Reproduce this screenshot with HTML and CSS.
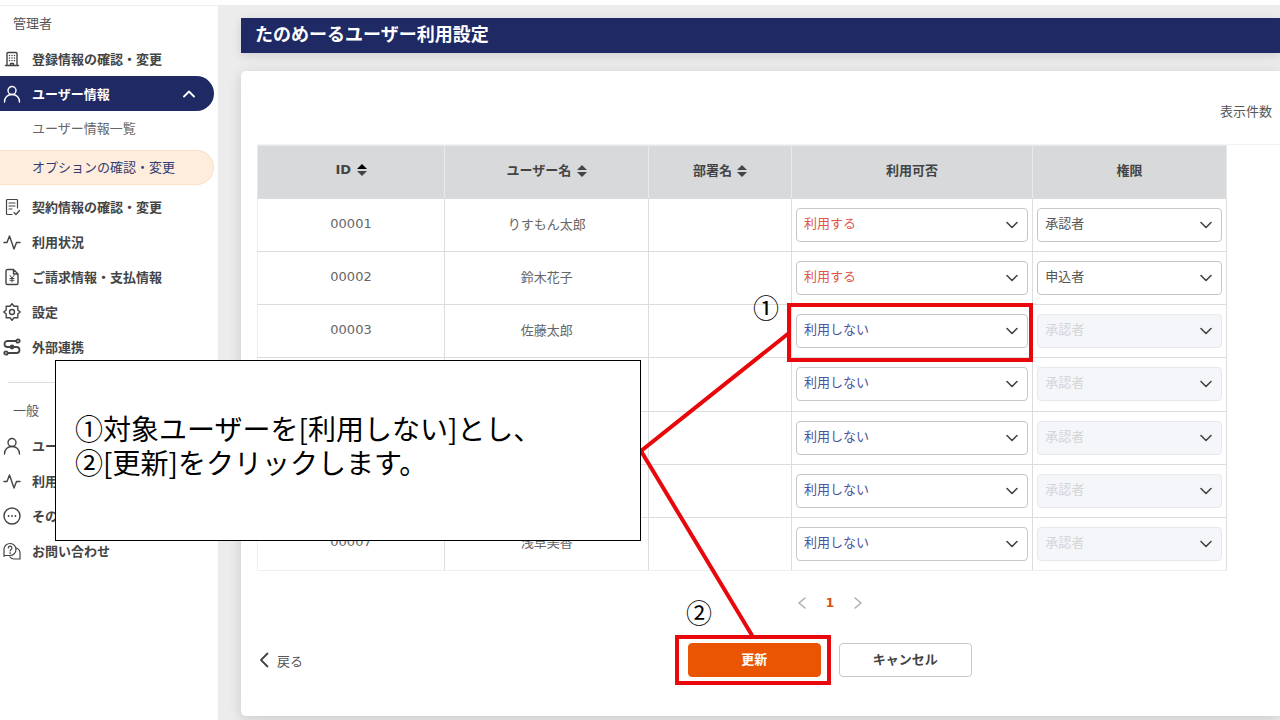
FILE: index.html
```html
<!DOCTYPE html>
<html lang="ja">
<head>
  <meta charset="UTF-8" />
  <title>たのめーるユーザー利用設定</title>
  <link rel="stylesheet" href="styles.css">
</head>
<body>
<div class="layout">

  <!-- Side menu -->
  <nav class="sidebar">
    <h2 class="menu-title">管理者</h2>
    <a class="menu-item" href="#">
      <svg class="icon" viewBox="0 0 18 18"><path d="M4 15.500V3.500a1 1 0 0 1 1-1h8a1 1 0 0 1 1 1v12M2.500 15.500h13M7.500 15.500v-2h3v2"/><path class="dots" d="M6.500 5.500h6M6.500 8h6M6.500 10.500h6"/></svg>
      登録情報の確認・変更
    </a>
    <a class="menu-item active" href="#">
      <svg class="icon" viewBox="0 0 18 18"><circle cx="9" cy="5.500" r="4"/><path d="M1.500 17c0-4.500 3-7.500 7.500-7.500s7.500 3 7.500 7.500"/></svg>
      ユーザー情報
      <svg class="arrow" viewBox="0 0 12 8"><path d="M1 6.500l5-5 5 5"/></svg>
    </a>
    <a class="menu-sub" href="#">ユーザー情報一覧</a>
    <a class="menu-sub current" href="#">オプションの確認・変更</a>
    <a class="menu-item" href="#">
      <svg class="icon thin" viewBox="0 0 18 18"><path d="M14.500 10V2.500a1 1 0 0 0-1-1h-9a1 1 0 0 0-1 1v13a1 1 0 0 0 1 1H9M6 5h6M6 8h6M6 11h3M11 14.500l2 2 3.500-4"/></svg>
      契約情報の確認・変更
    </a>
    <a class="menu-item" href="#">
      <svg class="icon" viewBox="0 0 18 18"><path d="M1 9.500h3L6.500 3l4.500 13 2.500-6.500H17"/></svg>
      利用状況
    </a>
    <a class="menu-item" href="#">
      <svg class="icon" viewBox="0 0 18 18"><path d="M10.500 1.500H4.500A1.500 1.500 0 0 0 3 3v12a1.500 1.500 0 0 0 1.500 1.500h9A1.500 1.500 0 0 0 15 15V6zM10.500 1.500V6H15"/><path class="yen" d="M7 7.500l2 2.500 2-2.500M9 10v4M7 10.500h4M7 12.300h4"/></svg>
      ご請求情報・支払情報
    </a>
    <a class="menu-item" href="#">
      <svg class="icon" viewBox="0 0 18 18"><circle cx="9" cy="9" r="2.500"/><path d="M9 .8 L11 3.200 L14.800 3.200 L14.800 7 L17.200 9 L14.800 11 L14.800 14.800 L11 14.800 L9 17.200 L7 14.800 L3.200 14.800 L3.200 11 L.8 9 L3.200 7 L3.200 3.200 L7 3.200z"/></svg>
      設定
    </a>
    <a class="menu-item" href="#">
      <svg class="icon bold" viewBox="0 0 18 18"><circle cx="15" cy="3" r="1.700"/><circle cx="3" cy="15" r="1.700"/><path d="M13.300 3H4.500a3 3 0 0 0 0 6h9a3 3 0 0 1 0 6H4.700"/><circle class="fill" cx="9" cy="9" r="1.500"/></svg>
      外部連携
    </a>
    <hr class="divider">
    <h2 class="menu-title">一般</h2>
    <a class="menu-item" href="#">
      <svg class="icon" viewBox="0 0 18 18"><circle cx="9" cy="5.500" r="4"/><path d="M1.500 17c0-4.500 3-7.500 7.500-7.500s7.500 3 7.500 7.500"/></svg>
      ユーザー情報
    </a>
    <a class="menu-item" href="#">
      <svg class="icon" viewBox="0 0 18 18"><path d="M1 9.500h3L6.500 3l4.500 13 2.500-6.500H17"/></svg>
      利用状況
    </a>
    <a class="menu-item" href="#">
      <svg class="icon" viewBox="0 0 18 18"><circle cx="9" cy="9" r="8"/><path class="dots wide" d="M5.600 9h8"/></svg>
      その他
    </a>
    <a class="menu-item" href="#">
      <svg class="icon thin" viewBox="0 0 18 18"><path d="M1 14.500V7a6 6 0 1 1 6 6.500H1zM13.500 6a5.500 5.500 0 0 1 3.500 5v6h-6a5 5 0 0 1-4-2"/><path d="M5.300 6a1.800 1.800 0 1 1 2.700 1.500c-.7.4-.9.800-.9 1.500M7.100 10.500v1"/></svg>
      お問い合わせ
    </a>
  </nav>

  <!-- Main -->
  <main class="main">
    <h1 class="page-title">たのめーるユーザー利用設定</h1>
    <section class="card">
      <p class="count">表示件数</p>
      <div class="table-wrap">
        <table class="users">
          <colgroup><col class="c-id"><col class="c-name"><col class="c-dept"><col class="c-use"><col class="c-role"></colgroup>
          <thead>
            <tr>
              <th>ID <svg class="sort" viewBox="0 0 10 12"><path class="up" d="M0 5l5-5 5 5z"/><path d="M0 7l5 5 5-5z"/></svg></th>
              <th>ユーザー名 <svg class="sort" viewBox="0 0 10 12"><path d="M0 5l5-5 5 5zM0 7l5 5 5-5z"/></svg></th>
              <th>部署名 <svg class="sort" viewBox="0 0 10 12"><path d="M0 5l5-5 5 5zM0 7l5 5 5-5z"/></svg></th>
              <th>利用可否</th>
              <th>権限</th>
            </tr>
          </thead>
          <tbody>
            <tr>
              <td>00001</td><td>りすもん太郎</td><td></td>
              <td class="field"><select class="select on" aria-label="利用可否"><option selected>利用する</option><option>利用しない</option></select></td>
              <td class="field"><select class="select" aria-label="権限"><option selected>承認者</option><option>申込者</option></select></td>
            </tr>
            <tr>
              <td>00002</td><td>鈴木花子</td><td></td>
              <td class="field"><select class="select on" aria-label="利用可否"><option selected>利用する</option><option>利用しない</option></select></td>
              <td class="field"><select class="select" aria-label="権限"><option>承認者</option><option selected>申込者</option></select></td>
            </tr>
            <tr>
              <td>00003</td><td>佐藤太郎</td><td></td>
              <td class="field"><select class="select off" aria-label="利用可否"><option>利用する</option><option selected>利用しない</option></select></td>
              <td class="field"><select class="select" aria-label="権限" disabled><option>承認者</option></select></td>
            </tr>
            <tr>
              <td></td><td></td><td></td>
              <td class="field"><select class="select off" aria-label="利用可否"><option>利用する</option><option selected>利用しない</option></select></td>
              <td class="field"><select class="select" aria-label="権限" disabled><option>承認者</option></select></td>
            </tr>
            <tr>
              <td></td><td></td><td></td>
              <td class="field"><select class="select off" aria-label="利用可否"><option>利用する</option><option selected>利用しない</option></select></td>
              <td class="field"><select class="select" aria-label="権限" disabled><option>承認者</option></select></td>
            </tr>
            <tr>
              <td></td><td></td><td></td>
              <td class="field"><select class="select off" aria-label="利用可否"><option>利用する</option><option selected>利用しない</option></select></td>
              <td class="field"><select class="select" aria-label="権限" disabled><option>承認者</option></select></td>
            </tr>
            <tr>
              <td>00007</td><td>浅草美香</td><td></td>
              <td class="field"><select class="select off" aria-label="利用可否"><option>利用する</option><option selected>利用しない</option></select></td>
              <td class="field"><select class="select" aria-label="権限" disabled><option>承認者</option></select></td>
            </tr>
          </tbody>
        </table>
      </div>

      <div class="pager">
        <button class="page-btn" aria-label="前へ"><svg viewBox="0 0 8 12"><path d="M7 1L1 6l6 5"/></svg></button>
        <a class="page-now" href="#">1</a>
        <button class="page-btn" aria-label="次へ"><svg viewBox="0 0 8 12"><path d="M1 1l6 5-6 5"/></svg></button>
      </div>

      <div class="actions">
        <a class="back" href="#"><svg viewBox="0 0 10 16"><path d="M8.500 1.500L2 8l6.500 6.500"/></svg>戻る</a>
        <div class="buttons">
          <button class="btn primary">更新</button>
          <button class="btn">キャンセル</button>
        </div>
      </div>
    </section>
  </main>
</div>

<!-- Guide notes over the page -->
<div class="guide">
  <svg class="lines" width="1280" height="720" viewBox="0 0 1280 720">
    <path d="M789 333L641 451L753 637"/>
    <rect x="789" y="305" width="242" height="55"/>
    <rect x="677" y="637" width="152" height="46"/>
  </svg>
  <span class="mark mark-1">①</span>
  <span class="mark mark-2">②</span>
  <div class="callout">
    <p>①対象ユーザーを[利用しない]とし、<br>②[更新]をクリックします。</p>
  </div>
</div>
</body>
</html>
```
FILE: styles.css
```css
*            {box-sizing:border-box;}
body         {font-family:"Noto Sans CJK JP", sans-serif; font-size:13px; margin:0; background:#fff; color:#444;}
a            {color:inherit; text-decoration:none;}
button       {font-family:inherit; cursor:pointer;}
svg          {fill:none; stroke:currentColor; stroke-linecap:round; stroke-linejoin:round;}

.layout      {display:flex; min-height:100vh; padding-top:5px;}

/* side menu */
.sidebar     {flex:0 0 218px; border-top:1px solid #eee;}
.menu-title  {display:flex; align-items:center; height:35px; margin:0; padding:0 0 2px 13px; font-size:13px; font-weight:400; color:#555;}
.menu-item   {display:flex; align-items:center; height:35px; margin-right:4px; padding-left:3px; gap:11px; font-weight:700;}
.active      {background:#1f2963; color:#fff; border-radius:0 18px 18px 0;}
.icon        {width:18px; height:18px; flex:none; stroke-width:1.4;}
.thin        {stroke-width:1.2;}
.bold        {stroke-width:1.8;}
.yen         {stroke-width:1;}
.dots        {stroke-dasharray:0 2.5; stroke-width:1.5;}
.wide        {stroke-dasharray:0 3.4; stroke-width:1.8;}
.fill        {fill:currentColor;}
.arrow       {width:12px; height:8px; margin-left:auto; margin-right:19px; stroke-width:1.8;}
.menu-sub    {display:flex; align-items:center; height:35px; margin:0 4px 4px 0; padding:0 0 2px 32px; color:#666;}
.current     {background:#feecdc; border:1px solid #fbdfc6; border-left:0; border-radius:0 18px 18px 0; color:#333c70;}
.divider     {margin:18px 8px 10px; border:0; border-top:1px solid #ddd;}

/* main */
.main        {flex:1; min-width:0; padding:13px 0 4px 23px; background:#ececec;}
.page-title  {display:flex; align-items:center; height:35px; margin:0 0 18px; padding:0 14px 5px; background:#1f2963; color:#fff; font-size:18px; line-height:26px; box-shadow:0 3px 10px rgba(0,0,0,0.12);}
.card        {padding:30px 0 39px 16px; background:#fff; border-radius:5px 0 0 5px; box-shadow:0 3px 14px rgba(0,0,0,0.14);}
.count       {margin:0 8px 23px; text-align:right; line-height:20px; color:#555;}
.table-wrap  {padding-right:53px; border-top:1px solid #f2f2f4;}

.users       {width:100%; height:426px; table-layout:fixed; border-collapse:collapse; text-align:center; color:#666; font-family:"DejaVu Sans", "Noto Sans CJK JP", sans-serif;}
.users th    {height:53px; padding:0 0 6px; background:#d7d9db; border:1px solid #e8e9ea; border-bottom-color:#ddd; color:#444;}
.users td    {height:53px; padding:0 0 4px; border:1px solid #ddd;}
.users td:first-child    {border-left-color:#eee;}
.users tr:last-child td  {border-bottom-color:#eee;}
.users .field {padding:0 4px;}
.c-id        {width:19.3%;}
.c-name      {width:21.1%;}
.c-dept      {width:14.7%;}
.c-use       {width:24.9%;}
.c-role      {width:20%;}
.sort        {width:10px; height:12px; margin-left:1px; vertical-align:-2px; fill:#444; stroke:none;}
.up          {fill:#000;}

.select      {display:block; width:100%; height:34px; padding:0 28px 3px 7px; appearance:none; border:1px solid #c4c6ca; border-radius:4px; font:inherit; font-size:13px; color:#555;
              background:#fff url("data:image/svg+xml,%3Csvg xmlns='http://www.w3.org/2000/svg' width='12' height='8' viewBox='0 0 12 8'%3E%3Cpath d='M1 1.5l5 5 5-5' fill='none' stroke='%23444' stroke-width='1.6' stroke-linecap='round' stroke-linejoin='round'/%3E%3C/svg%3E") no-repeat right 9px center;}
.on          {color:#e05548;}
.off         {color:#4a549c;}
.select:disabled {background-color:#f5f6fa; border-color:#e6e8ec; color:#d3d4d8; opacity:1;}

.pager       {display:flex; justify-content:center; align-items:center; gap:20px; padding:22px 0 0 12%;}
.page-btn    {padding:0; border:0; background:none; color:#aaa; line-height:0;}
.page-btn svg {width:8px; height:12px; stroke-width:1.4;}
.page-now    {font-family:"DejaVu Sans", sans-serif; font-size:12px; font-weight:700; line-height:20px; color:#d8500c;}

.actions     {display:grid; grid-template-columns:42% auto; align-items:center; margin-top:30px;}
.back        {display:flex; align-items:center; gap:8px; padding-left:2px; color:#555;}
.back svg    {width:10px; height:16px; stroke-width:1.8; color:#444;}
.buttons     {display:flex; gap:18px; padding-left:1px;}
.btn         {width:133px; height:34px; padding:0 0 4px; border:1px solid #c8c8c8; border-radius:4px; background:#fff; color:#444; font-size:13px; font-weight:700;}
.primary     {background:#ea5504; border-color:#ea5504; color:#fff;}

/* guide notes */
.guide       {position:absolute; top:0; left:0; color:#000; pointer-events:none;}
.lines       {display:block; stroke:#e8080c; stroke-width:4; stroke-linecap:butt; stroke-linejoin:miter;}
.mark        {position:absolute; font-size:26px; line-height:32px;}
.mark-1      {left:753px; top:291px;}
.mark-2      {left:686px; top:596px;}
.callout     {position:absolute; left:55px; top:360px; width:586px; height:181px; display:flex; align-items:center; padding:0 19px 12px; border:1px solid #000; background:#fff;}
.callout p   {margin:0; font-size:28px; line-height:34px; white-space:nowrap;}
```
